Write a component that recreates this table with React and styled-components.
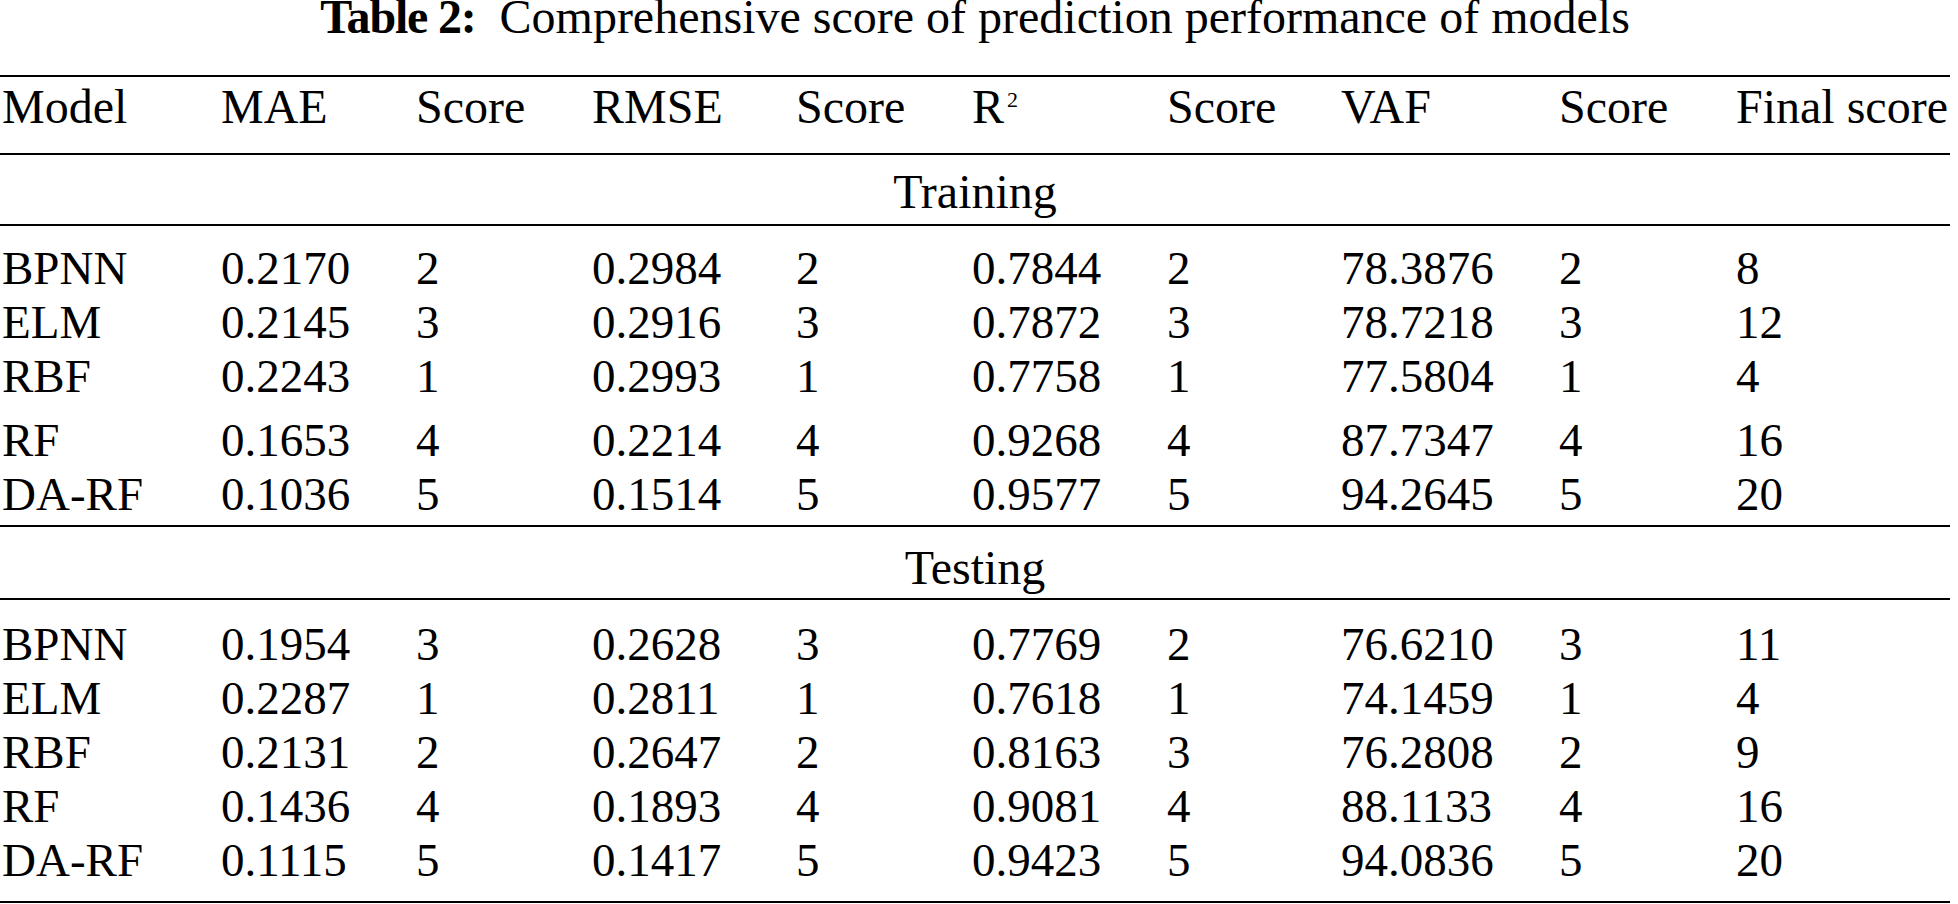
import styled, { createGlobalStyle } from "styled-components";

const GlobalStyle = createGlobalStyle`
  html, body {
    margin: 0;
    padding: 0;
    background: #fff;
  }
  body {
    font-family: "Liberation Serif", "Times New Roman", serif;
    color: #000;
  }
`;

const Page = styled.div`
  width: 1950px;
`;

const Caption = styled.div`
  text-align: center;
  font-size: 48px;
  line-height: 34px;
  height: 34px;
  margin-bottom: 41px;
  white-space: nowrap;
`;

const CaptionLabel = styled.span`
  font-weight: 700;
  letter-spacing: -1.2px;
  margin-right: 24px;
`;

const Table = styled.div`
  border-top: 2px solid #000;
  font-size: 48px;
`;

const Row = styled.div`
  display: grid;
  grid-template-columns: 219px 195px 176px 204px 176px 195px 174px 218px 177px 1fr;
  padding-left: 2px;
  line-height: ${(p) => p.$lineHeight || 54}px;
  font-size: ${(p) => p.$size || 48}px;
  margin-top: ${(p) => p.$gap || 0}px;
  white-space: nowrap;
`;

const HeadRow = styled(Row)`
  padding-bottom: 16px;
  border-bottom: 2px solid #000;
`;

const Cell = styled.div``;

const Sup = styled.span`
  font-size: 22px;
  vertical-align: 16px;
  line-height: 0;
  margin-left: 3px;
`;

const SectionTitle = styled.div`
  text-align: center;
  line-height: 60px;
  padding-top: ${(p) => p.$top}px;
  padding-bottom: ${(p) => p.$bottom}px;
  border-bottom: 2px solid #000;
`;

const Group = styled.div`
  padding-top: ${(p) => p.$top}px;
  padding-bottom: ${(p) => p.$bottom}px;
  border-bottom: 2px solid #000;
`;

const training = [
  ["BPNN", "0.2170", "2", "0.2984", "2", "0.7844", "2", "78.3876", "2", "8"],
  ["ELM", "0.2145", "3", "0.2916", "3", "0.7872", "3", "78.7218", "3", "12"],
  ["RBF", "0.2243", "1", "0.2993", "1", "0.7758", "1", "77.5804", "1", "4"],
  ["RF", "0.1653", "4", "0.2214", "4", "0.9268", "4", "87.7347", "4", "16"],
  ["DA-RF", "0.1036", "5", "0.1514", "5", "0.9577", "5", "94.2645", "5", "20"],
];

const testing = [
  ["BPNN", "0.1954", "3", "0.2628", "3", "0.7769", "2", "76.6210", "3", "11"],
  ["ELM", "0.2287", "1", "0.2811", "1", "0.7618", "1", "74.1459", "1", "4"],
  ["RBF", "0.2131", "2", "0.2647", "2", "0.8163", "3", "76.2808", "2", "9"],
  ["RF", "0.1436", "4", "0.1893", "4", "0.9081", "4", "88.1133", "4", "16"],
  ["DA-RF", "0.1115", "5", "0.1417", "5", "0.9423", "5", "94.0836", "5", "20"],
];

function DataRow({ values, gap }) {
  return (
    <Row $gap={gap} $size={47}>
      {values.map((v, i) => (
        <Cell key={i}>{v}</Cell>
      ))}
    </Row>
  );
}

export default function App() {
  return (
    <>
      <GlobalStyle />
      <Page>
        <Caption>
          <CaptionLabel>Table 2:</CaptionLabel>
          Comprehensive score of prediction performance of models
        </Caption>
        <Table>
          <HeadRow $lineHeight={60}>
            <Cell>Model</Cell>
            <Cell>MAE</Cell>
            <Cell>Score</Cell>
            <Cell>RMSE</Cell>
            <Cell>Score</Cell>
            <Cell>
              R<Sup>2</Sup>
            </Cell>
            <Cell>Score</Cell>
            <Cell>VAF</Cell>
            <Cell>Score</Cell>
            <Cell>Final score</Cell>
          </HeadRow>

          <SectionTitle $top={7} $bottom={2}>Training</SectionTitle>
          <Group $top={15} $bottom={4}>
            {training.map((r, i) => (
              <DataRow key={r[0]} values={r} gap={i === 3 ? 10 : 0} />
            ))}
          </Group>

          <SectionTitle $top={11} $bottom={0}>Testing</SectionTitle>
          <Group $top={17} $bottom={14}>
            {testing.map((r) => (
              <DataRow key={r[0]} values={r} />
            ))}
          </Group>
        </Table>
      </Page>
    </>
  );
}
